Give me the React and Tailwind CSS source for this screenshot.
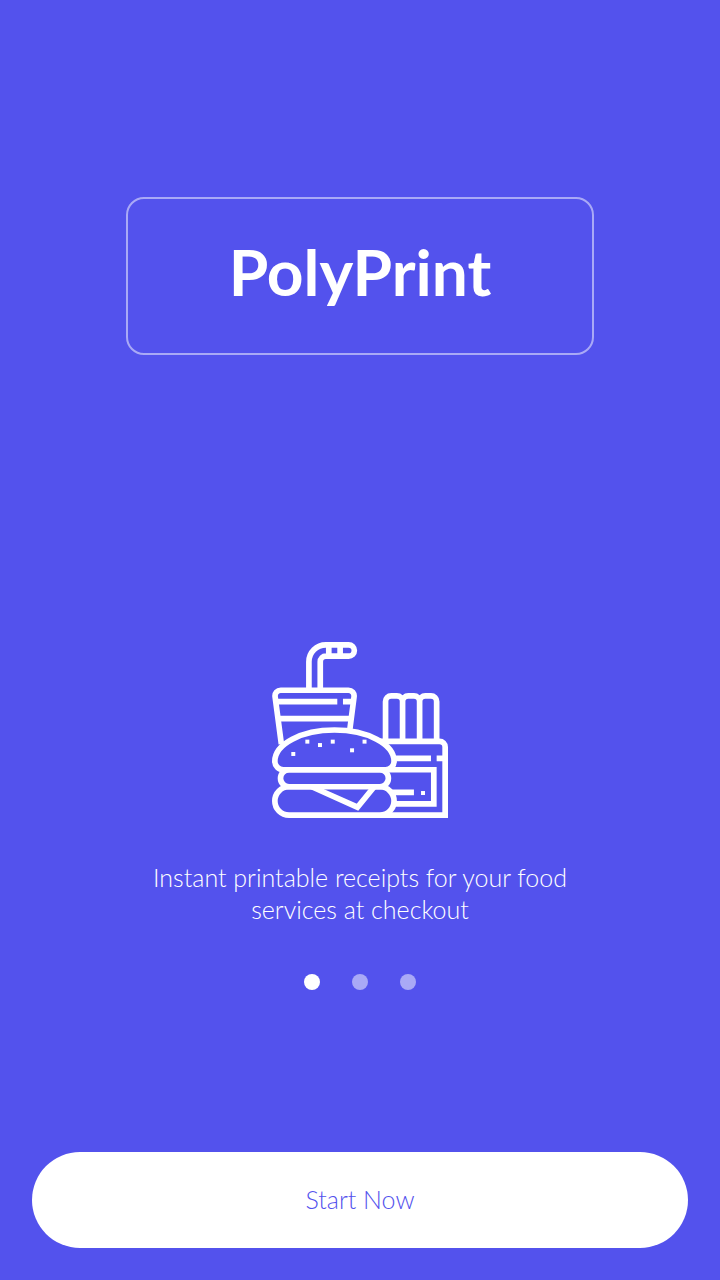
const slides = [
  { id: 'receipts', label: 'Slide 1' },
  { id: 'second', label: 'Slide 2' },
  { id: 'third', label: 'Slide 3' },
];

const sesameSeeds = [
  [12.45, 35.1],
  [7.5, 39.45],
  [16.9, 36.3],
  [21.4, 35.1],
  [28.2, 38.15],
  [32.6, 35.1],
];

function FastFoodIcon() {
  return (
    <svg
      viewBox="0 0 62 62"
      className="h-44 w-44 fill-[#5352ed] stroke-white stroke-2"
      aria-hidden="true"
    >
      {/* straw */}
      <path d="M13 17V7a6 6 0 0 1 6-6h8a2 2 0 0 1 0 4h-8a2 2 0 0 0-2 2v10M20 1v4M24 1v4" />
      {/* cup */}
      <path d="M3.3 36 1.1 19.3A2 2 0 0 1 3.1 17h23.8a2 2 0 0 1 2 2.3L27.4 31" />
      <path d="M1.4 21H23M25 21h3.6M2.2 27h25.6" />
      {/* fries */}
      <path d="M40 35V21a2 2 0 0 1 2-2h2a2 2 0 0 1 2 2v14M46 35V21a2 2 0 0 1 2-2h2a2 2 0 0 1 2 2v14M52 35V21a2 2 0 0 1 2-2h2a2 2 0 0 1 2 2v14" />
      {/* fries box */}
      <path d="M38 35h21a2 2 0 0 1 2 2v24H38M40 41h16M58 41h3M38 45h19v12H38M40 53h10" />
      <rect x="52.5" y="52.5" width="1.4" height="1.4" className="fill-white stroke-none" />
      {/* burger */}
      <path d="M6 51h32a5 5 0 0 1 0 10H6a5 5 0 0 1 0-10z" />
      <path d="M14 51l16.1 7.2L36 51" />
      <path d="M6 45h32a3 3 0 0 1 0 6H6a3 3 0 0 1 0-6z" />
      <path d="M4 45a3 3 0 0 1-3-3A21 11 0 0 1 43 42a3 3 0 0 1-3 3z" />
      {sesameSeeds.map(([x, y]) => (
        <rect
          key={`${x}-${y}`}
          x={x - 0.7}
          y={y - 0.7}
          width="1.4"
          height="1.4"
          className="fill-white stroke-none"
        />
      ))}
    </svg>
  );
}

export default function App() {
  return (
    <main className="flex min-h-screen flex-col items-center bg-[#5352ed] px-8 pt-[197px] pb-8 font-['Lato','Open_Sans',sans-serif] text-white">
      <div className="flex w-[468px] max-w-full justify-center rounded-[18px] border-2 border-white/50 pt-[33px] pb-[41px]">
        <h1 className="text-[64px] leading-[80px] font-bold">PolyPrint</h1>
      </div>

      <section className="mt-[287px] flex flex-col items-center">
        <FastFoodIcon />
        <p className="mt-[43px] max-w-[440px] text-center text-[25px] leading-8 font-light">
          Instant printable receipts for your food services at checkout
        </p>
        <div className="mt-[49px] flex gap-8">
          {slides.map((slide, index) => (
            <button
              key={slide.id}
              type="button"
              aria-label={slide.label}
              aria-current={index === 0}
              className={index === 0 ? 'size-4 rounded-full bg-white' : 'size-4 rounded-full bg-white/50'}
            />
          ))}
        </div>
      </section>

      <button
        type="button"
        className="mt-auto h-24 w-full rounded-full bg-white pb-0.5 text-[25px] leading-8 font-light text-[#5352ed]"
      >
        Start Now
      </button>
    </main>
  );
}
